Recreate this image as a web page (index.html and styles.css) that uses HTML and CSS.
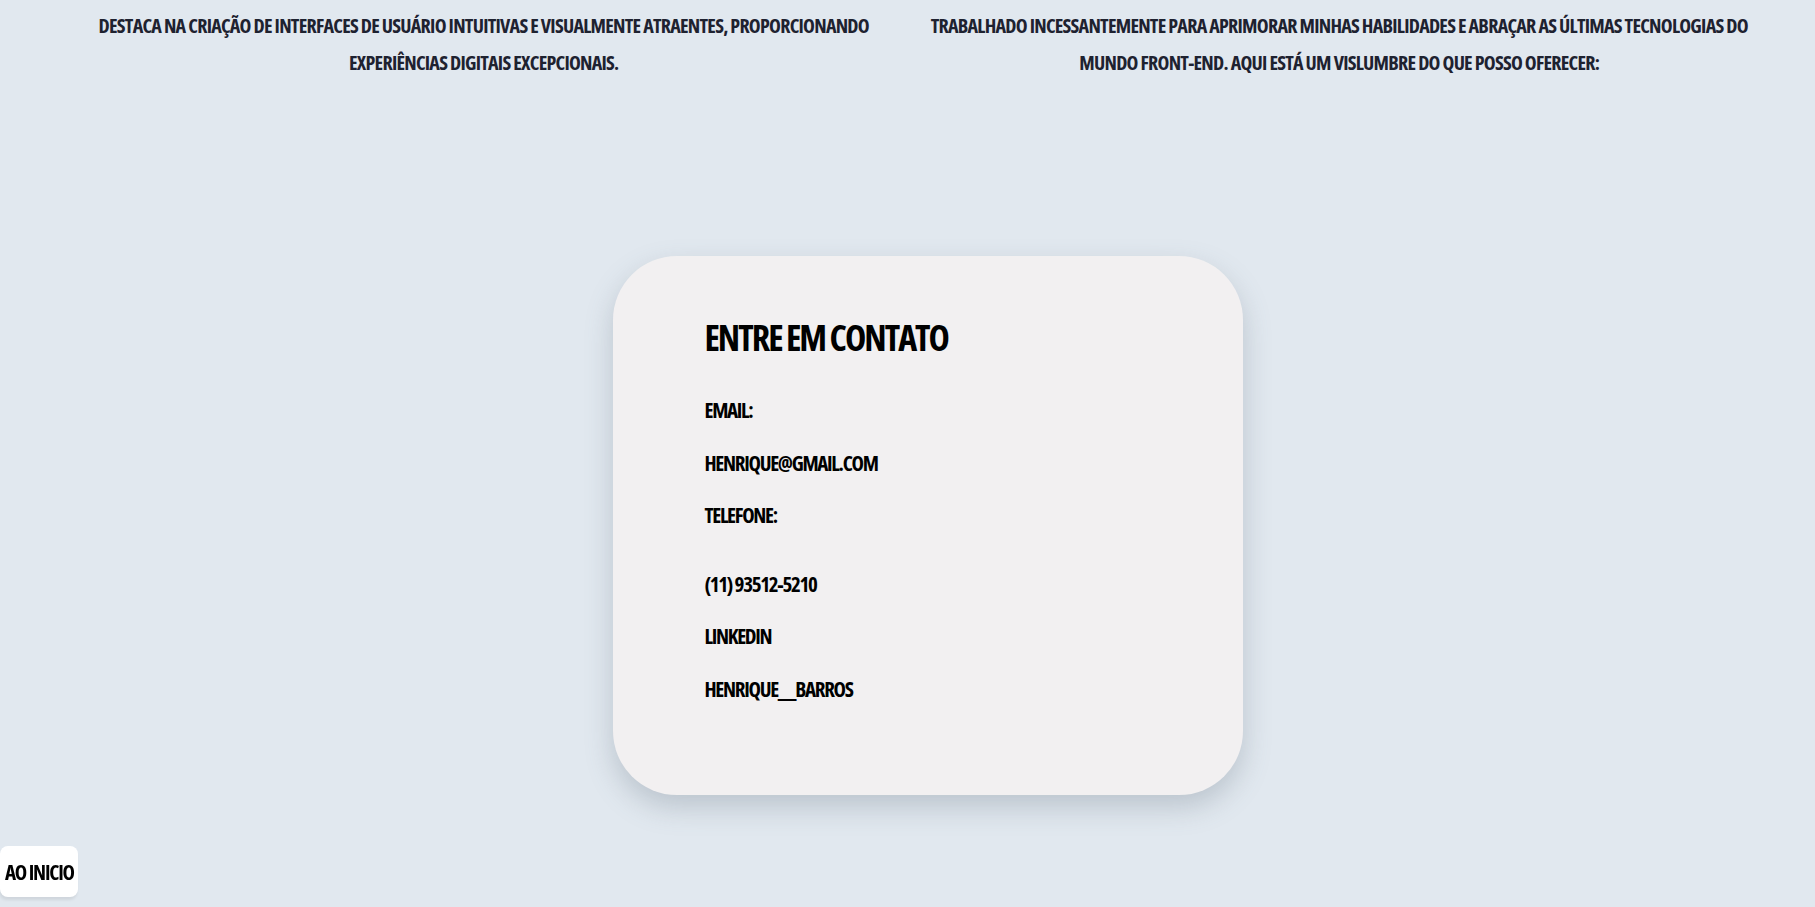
FILE: index.html
```html
<!DOCTYPE html>
<html lang="pt-BR">
<head>
<meta charset="utf-8">
<title>Contato</title>
<link rel="stylesheet" href="styles.css">
</head>
<body>
<main class="page">
  <section class="about">
    <p class="about-text">Destaca na criação de interfaces de usuário intuitivas e visualmente atraentes, proporcionando<br>experiências digitais excepcionais.</p>
    <p class="about-text">Trabalhado incessantemente para aprimorar minhas habilidades e abraçar as últimas tecnologias do<br>mundo front-end. Aqui está um vislumbre do que posso oferecer:</p>
  </section>

  <section class="contact-wrap">
    <div class="contact-card">
      <h2 class="contact-title">Entre em contato</h2>
      <p class="contact-line">Email:</p>
      <p class="contact-line">henrique@gmail.com</p>
      <p class="contact-line">Telefone:</p>
      <p class="contact-line contact-phone">(11) 93512-5210</p>
      <p class="contact-line">Linkedin</p>
      <p class="contact-line">henrique__barros</p>
    </div>
  </section>

  <a class="to-top" href="#">Ao inicio</a>
</main>
</body>
</html>
```
FILE: styles.css
```css
* { box-sizing: border-box; }

html, body {
  margin: 0;
  padding: 0;
}

body {
  background: #e1e8ef;
  font-family: "Open Sans", "DejaVu Sans", sans-serif;
  font-stretch: 75%;
  font-weight: 700;
  text-transform: uppercase;
  color: #000;
}

.page {
  min-height: 907px;
}

.about {
  display: grid;
  grid-template-columns: minmax(0, 1fr) minmax(0, 1fr);
  padding: 0 48px 0 56px;
}

.about-text {
  margin: 8px 0 0;
  text-align: center;
  white-space: nowrap;
  font-size: 20px;
  line-height: 36.7px;
  letter-spacing: -0.75px;
  color: #1e2230;
}

.contact-wrap {
  display: flex;
  justify-content: center;
  padding: 175px 0 0 40px;
}

.contact-card {
  width: 630px;
  height: 539px;
  background: #f2f0f1;
  border-radius: 64px;
  box-shadow: 0 12px 28px rgba(90, 105, 120, 0.28);
  padding: 58px 92px 0;
}

.contact-title {
  margin: 0 0 34px;
  font-size: 36px;
  line-height: 48px;
  letter-spacing: -2px;
  font-weight: 700;
}

.contact-line {
  margin: 24px 0;
  font-size: 21px;
  line-height: 28.5px;
  letter-spacing: -1.3px;
}

.contact-phone {
  margin-top: 40px;
}

.to-top {
  position: fixed;
  left: 0;
  bottom: 10px;
  width: 78px;
  height: 51px;
  padding-left: 5px;
  display: flex;
  align-items: center;
  background: #fff;
  border-radius: 8px;
  box-shadow: -1px 3px 3px rgba(0, 0, 0, 0.08);
  color: #000;
  text-decoration: none;
  font-size: 21px;
  letter-spacing: -1.2px;
  white-space: nowrap;
}
```
